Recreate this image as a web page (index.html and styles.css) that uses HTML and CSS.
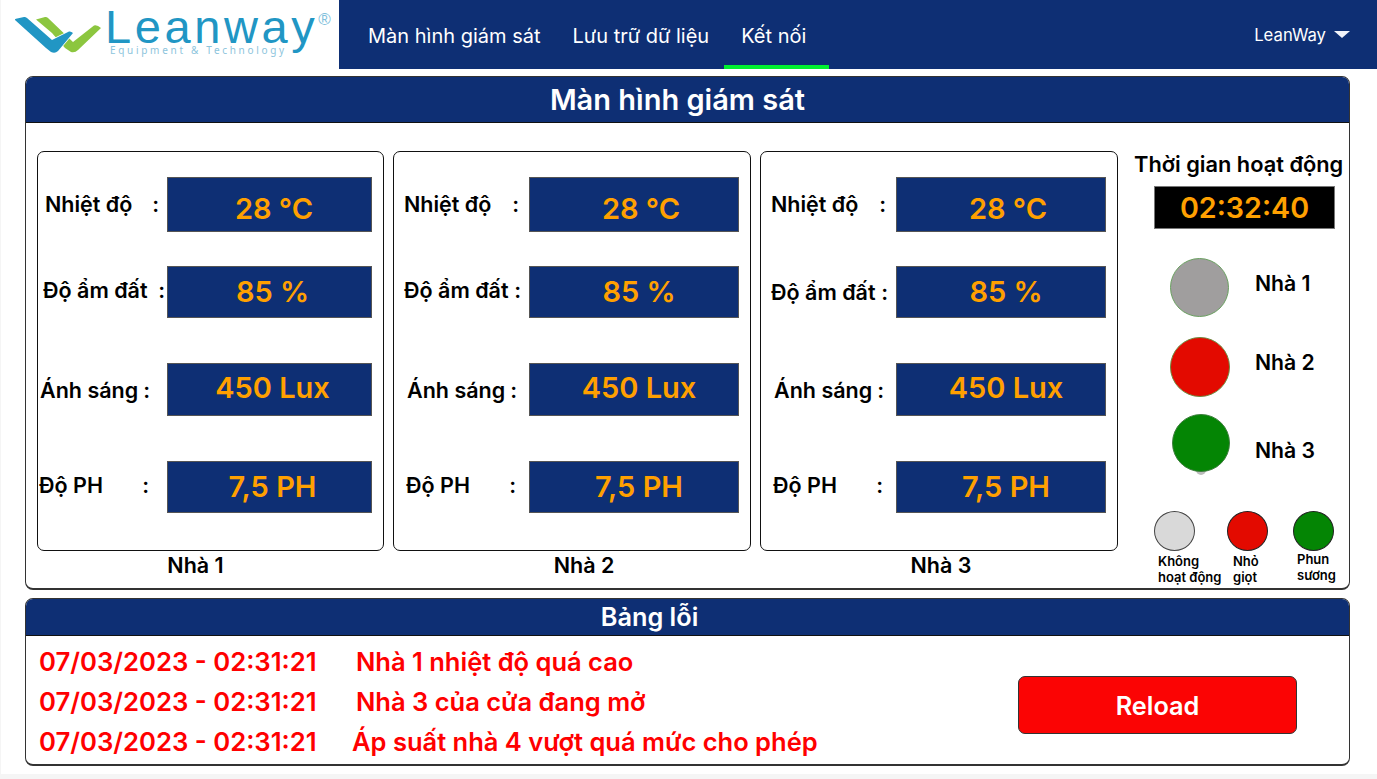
FILE: index.html
```html
<!DOCTYPE html>
<html lang="vi">
<head>
  <meta charset="UTF-8" />
  <meta name="viewport" content="width=device-width, initial-scale=1.0" />
  <title>Màn hình giám sát</title>
  <link rel="stylesheet" href="styles.css">
</head>
<body>
  <div class="page">
    <header class="topbar">
      <div class="logo">
        <svg class="logo-mark" width="90" height="42" viewBox="14 14 90 42">
          <path d="M36 19.500L45 17Q47 16.800 48 18L73 42L94 25.500Q97 24.500 101 28L78 50Q75 53 71 52L65 48L52 33Z" fill="#8cc63f"/>
          <path d="M15 20Q14.500 19 16 18.700L24 17Q25.500 16.800 27 18L52 40L69 31.500Q71 31 73 33L58 51Q55 54 51 52L46 48Z" fill="#2196c4" stroke="#fff" stroke-width="1.500" paint-order="stroke"/>
        </svg>
        <div class="logo-text">
          <div class="logo-name">Leanway<sup class="logo-reg">®</sup></div>
          <div class="logo-tag">Equipment &amp; Technology</div>
        </div>
      </div>
      <nav class="nav">
        <a class="nav-link">Màn hình giám sát</a>
        <a class="nav-link">Lưu trữ dữ liệu</a>
        <a class="nav-link active">Kết nối</a>
        <div class="user">LeanWay <span class="caret"></span></div>
      </nav>
    </header>

    <main class="content">
      <section class="panel monitor">
        <h2 class="panel-title">Màn hình giám sát</h2>
        <div class="monitor-body">
          <div class="house house-1">
            <div class="card">
              <div class="label l-temp"><span>Nhiệt độ</span><span>:</span></div>
              <div class="value v-temp">28 °C</div>
              <div class="label l-soil"><span>Độ ẩm đất</span><span>:</span></div>
              <div class="value v-soil">85 %</div>
              <div class="label l-light"><span>Ánh sáng</span><span>:</span></div>
              <div class="value v-light">450 Lux</div>
              <div class="label l-ph"><span>Độ PH</span><span>:</span></div>
              <div class="value v-ph">7,5 PH</div>
            </div>
            <div class="house-name">Nhà 1</div>
          </div>
          <div class="house house-2">
            <div class="card">
              <div class="label l-temp"><span>Nhiệt độ</span><span>:</span></div>
              <div class="value v-temp">28 °C</div>
              <div class="label l-soil"><span>Độ ẩm đất</span><span>:</span></div>
              <div class="value v-soil">85 %</div>
              <div class="label l-light"><span>Ánh sáng</span><span>:</span></div>
              <div class="value v-light">450 Lux</div>
              <div class="label l-ph"><span>Độ PH</span><span>:</span></div>
              <div class="value v-ph">7,5 PH</div>
            </div>
            <div class="house-name">Nhà 2</div>
          </div>
          <div class="house house-3">
            <div class="card">
              <div class="label l-temp"><span>Nhiệt độ</span><span>:</span></div>
              <div class="value v-temp">28 °C</div>
              <div class="label l-soil"><span>Độ ẩm đất</span><span>:</span></div>
              <div class="value v-soil">85 %</div>
              <div class="label l-light"><span>Ánh sáng</span><span>:</span></div>
              <div class="value v-light">450 Lux</div>
              <div class="label l-ph"><span>Độ PH</span><span>:</span></div>
              <div class="value v-ph">7,5 PH</div>
            </div>
            <div class="house-name">Nhà 3</div>
          </div>

          <aside class="side">
            <div class="side-title">Thời gian hoạt động</div>
            <div class="clock">02:32:40</div>
            <div class="status status-1"><span class="lamp lamp-off"></span><span class="status-name">Nhà 1</span></div>
            <div class="status status-2"><span class="lamp lamp-red"></span><span class="status-name">Nhà 2</span></div>
            <div class="status status-3"><span class="lamp lamp-green"></span><span class="status-name">Nhà 3</span></div>
            <div class="legend">
              <div class="legend-item legend-off"><span class="dot"></span><p>Không<br>hoạt động</p></div>
              <div class="legend-item legend-red"><span class="dot"></span><p>Nhỏ<br>giọt</p></div>
              <div class="legend-item legend-green"><span class="dot"></span><p>Phun<br>sương</p></div>
            </div>
          </aside>
        </div>
      </section>

      <section class="panel errors">
        <h2 class="panel-title errors-title">Bảng lỗi</h2>
        <div class="errors-body">
          <div class="log">
            <div class="log-row"><span class="log-time">07/03/2023 - 02:31:21</span><span>Nhà 1 nhiệt độ quá cao</span></div>
            <div class="log-row"><span class="log-time">07/03/2023 - 02:31:21</span><span>Nhà 3 của cửa đang mở</span></div>
            <div class="log-row"><span class="log-time">07/03/2023 - 02:31:21</span><span class="log-shift">Áp suất nhà 4 vượt quá mức cho phép</span></div>
          </div>
          <button class="reload">Reload</button>
        </div>
      </section>
    </main>
  </div>
</body>
</html>
```

FILE: styles.css
```css
* {
  box-sizing: border-box;
}
html, body {
  margin: 0;
  height: 100%;
  overflow: hidden;
}
body {
  font-family: Inter, "Liberation Sans", sans-serif;
  background-color: #f5f5f5;
  color: #000;
}
.page {
  height: 774px;
  margin-left: 1px;
  background-color: #fff;
}

/* top bar */
.topbar {
  display: flex;
  height: 69px;
}
.logo {
  width: 338px;
  display: flex;
  padding: 8px 0 0 13px;
}
.logo-mark {
  margin-top: 6px;
  flex: none;
}
.logo-text {
  margin-left: 4px;
  color: #2196c4;
}
.logo-name {
  font-family: "Liberation Sans", sans-serif;
  font-size: 47px;
  line-height: 38px;
  letter-spacing: 3.600px;
  margin-left: -3px;
  white-space: nowrap;
}
.logo-reg {
  font-size: 17px;
  line-height: 0;
  letter-spacing: 0;
  color: #7fc0dc;
  vertical-align: 18px;
}
.logo-tag {
  font-family: "Noto Sans", sans-serif;
  font-size: 10px;
  line-height: 9px;
  letter-spacing: 2.7px;
  margin-left: 2px;
  color: #8cc4dc;
  white-space: nowrap;
}
.nav {
  flex: 1;
  display: flex;
  align-items: stretch;
  padding-left: 13px;
  background-color: #0e2f74;
  color: #fff;
}
.nav-link {
  padding: 6px 16px 0;
  display: flex;
  align-items: center;
  font-size: 20px;
  border-bottom: 4px solid transparent;
}
.nav-link.active {
  margin-left: -1px;
  padding-left: 17px;
  padding-right: 23px;
  border-bottom-color: #00f030;
}
.user {
  margin-left: auto;
  margin-right: 27px;
  display: flex;
  align-items: center;
  font-size: 16.700px;
  gap: 8px;
}
.caret {
  width: 0;
  height: 0;
  border-left: 8px solid transparent;
  border-right: 8px solid transparent;
  border-top: 7px solid #f0f3fa;
  filter: blur(0.5px);
}

/* panels */
.content {
  padding: 7px 27px 0 24px;
}
.panel {
  border: 1.5px solid #333;
  border-bottom-width: 2px;
  border-radius: 8px;
  overflow: hidden;
  background-color: #fff;
}
.panel-title {
  margin: 0;
  height: 46px;
  background-color: #0e2f74;
  border-bottom: 1px solid #111;
  color: #fff;
  font-size: 29px;
  font-weight: 600;
  line-height: 46px;
  text-align: center;
  padding-right: 20px;
}
.monitor {
  height: 514px;
}
.monitor-body {
  display: flex;
  padding: 28px 0 0 11px;
  gap: 9px;
}
.house {
  flex: none;
}
.house-1 { width: 347px; }
.house-2, .house-3 { width: 358px; }

.card {
  height: 400px;
  border: 1px solid #111;
  border-radius: 7px;
  display: grid;
  grid-template-rows: 55px 52px 64px 63px;
  row-gap: 34px;
  padding-top: 25px;
  align-items: center;
}
.house-1 .card { grid-template-columns: 129px 205px; }
.house-2 .card, .house-3 .card { grid-template-columns: 135px 210px; }

.label {
  display: flex;
  justify-content: space-between;
  font-weight: 600;
  font-size: 21.500px;
  line-height: 26px;
  white-space: nowrap;
}
.value {
  align-self: end;
  background-color: #0e2f74;
  border: 1px solid #555;
  color: #ffa000;
  font-size: 29px;
  font-weight: 600;
  display: flex;
  align-items: center;
  justify-content: center;
  padding-left: 6px;
}
.house-2 .value, .house-3 .value { padding-left: 10px; }
.v-temp { height: 55px; padding-top: 7px; }
.house-1 .v-temp { padding-left: 9px; }
.house-2 .v-temp, .house-3 .v-temp { padding-left: 14px; }
.v-soil { height: 52px; padding-bottom: 2px; }
.v-light { height: 53px; padding-bottom: 5px; }
.v-ph { height: 52px; padding-bottom: 2px; }
.l-temp { margin-bottom: 1px; }
.l-soil { margin-bottom: 5px; }
.l-light { margin-top: 12px; }
.l-ph { margin-top: 7px; }

/* each card's labels sit a little differently */
.house-1 .l-temp { width: 114px; margin-left: 7px; }
.house-1 .l-soil { width: 122px; margin-left: 5px; }
.house-1 .l-light { width: 110px; margin-left: 2px; }
.house-1 .l-ph { width: 110px; margin-left: 1px; }
.house-2 .l-temp, .house-3 .l-temp { width: 115px; margin-left: 10px; }
.house-2 .l-soil, .house-3 .l-soil { width: 117px; margin-left: 10px; }
.house-2 .l-light, .house-3 .l-light { width: 110px; margin-left: 13px; }
.house-2 .l-ph, .house-3 .l-ph { width: 110px; margin-left: 12px; }
.house-3 .l-soil { margin-bottom: 0; }

.house-name {
  font-size: 21.500px;
  font-weight: 600;
  line-height: 24px;
  margin-top: 2px;
  text-align: center;
}
.house-1 .house-name { padding-right: 30px; }
.house-2 .house-name { padding-left: 24px; }
.house-3 .house-name { padding-left: 4px; }

/* right column */
.side {
  flex: 1;
  min-width: 0;
  margin-left: -9px;
  padding-left: 16px;
}
.side-title {
  font-size: 21.800px;
  font-weight: 600;
  line-height: 26px;
  white-space: nowrap;
}
.clock {
  width: 181px;
  height: 43px;
  margin: 9px 0 0 20px;
  background-color: #000;
  border: 1px solid #777;
  color: #ffa000;
  font-size: 28.700px;
  font-weight: 600;
  line-height: 41px;
  text-align: center;
}
.status {
  display: flex;
  align-items: center;
  padding-left: 36px;
}
.status-1 { margin-top: 29px; }
.status-2 { margin-top: 20px; }
.status-3 { margin-top: 17px; padding-left: 38px; }
.lamp {
  width: 59px;
  height: 59px;
  border-radius: 50%;
  flex: none;
}
.lamp-off { background-color: #a09e9e; border: 1.5px solid #6aa060; }
.lamp-red { background-color: #e30a00; border: 1px solid #6f8a40; height: 60px; width: 60px; }
.lamp-green {
  background-color: #048504;
  border: 1px solid #3f7f3f;
  width: 58px;
  height: 58px;
  box-shadow: 0 27px 0 -24px #bbb;
}
.status-name {
  margin-left: 26px;
  font-size: 21.200px;
  font-weight: 600;
  line-height: 24px;
}
.status-1 .status-name { margin-bottom: 9px; }
.status-2 .status-name { margin-left: 25px; margin-bottom: 10px; }
.status-3 .status-name { margin-left: 25px; margin-top: 14px; }
.legend {
  display: grid;
  grid-template-columns: 73px 66px 60px;
  margin: 39px 0 0 20px;
}
.dot {
  display: block;
  width: 41px;
  height: 40px;
  border-radius: 50%;
  border: 1px solid #444;
}
.legend-off .dot { background-color: #d9d9d9; }
.legend-red .dot { background-color: #e30a00; border-color: #222; }
.legend-green .dot { background-color: #048504; border-color: #222; }
.legend-item p {
  margin: 2px 0 0 4px;
  font-size: 13px;
  font-weight: 600;
  line-height: 16px;
  white-space: nowrap;
}
.legend-red p { margin-left: 6px; }
.legend-green p { margin-top: 0; }

/* errors */
.errors {
  height: 168px;
  margin-top: 8px;
}
.errors-title {
  height: 37px;
  font-size: 25.300px;
  line-height: 35px;
  padding-right: 76px;
}
.errors-body {
  display: flex;
  padding: 5px 0 0 13px;
}
.log {
  width: 979px;
}
.log-row {
  display: flex;
  height: 40px;
  align-items: center;
  color: #ff0000;
  font-size: 25.500px;
  font-weight: 600;
  white-space: nowrap;
}
.log-time {
  width: 317px;
  font-size: 25.700px;
}
.log-shift {
  margin-left: -4px;
}
.reload {
  width: 279px;
  height: 58px;
  margin-top: 35px;
  background-color: #fb0404;
  border: 1px solid #333;
  border-radius: 7px;
  color: #fff;
  font-family: inherit;
  font-size: 25.300px;
  font-weight: 600;
}
```
